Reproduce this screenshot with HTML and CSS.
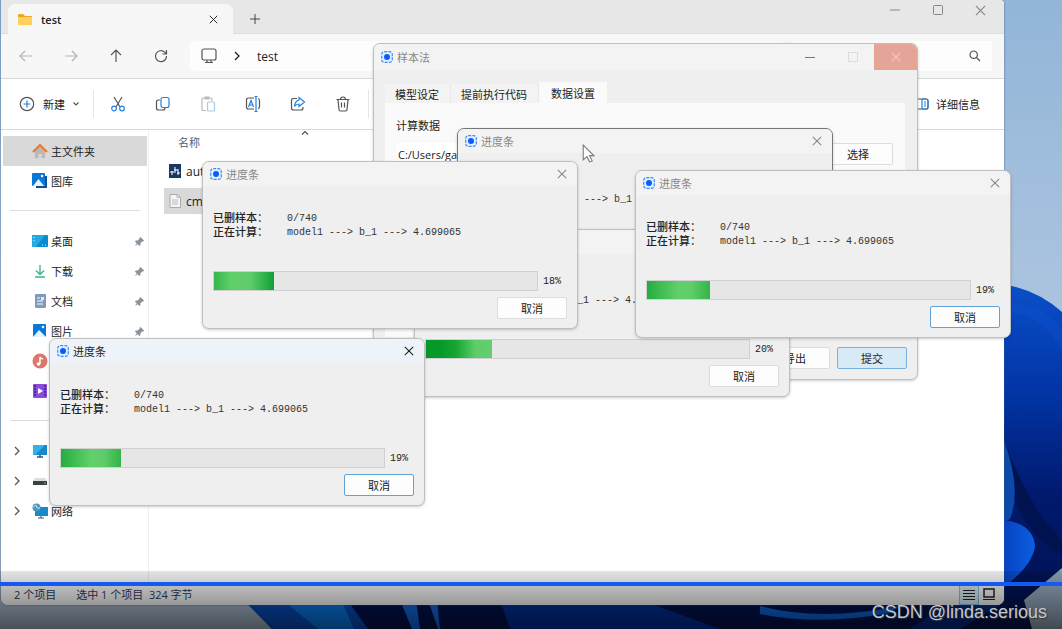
FILE: index.html
```html
<!DOCTYPE html>
<html lang="zh-CN">
<head>
  <meta charset="UTF-8">
  <meta name="viewport" content="width=device-width, initial-scale=1.0">
  <title>test</title>
  <link rel="stylesheet" href="styles.css">
</head>
<body>
  <!-- shared icons -->
  <svg class="sprite" aria-hidden="true">
    <symbol id="app" viewBox="0 0 12 12">
      <rect x=".7" y=".7" width="10.6" height="10.6" rx="2.500" fill="#e2f0ff" stroke="#3b8cf5" stroke-width="1.2" stroke-dasharray="3 1.2"/>
      <circle cx="6" cy="6" r="3" fill="#0a5cff"/>
    </symbol>
    <symbol id="x" viewBox="0 0 12 12">
      <path d="M1 1l10 10M11 1L1 11" fill="none" stroke="currentColor" stroke-width="1.3"/>
    </symbol>
    <symbol id="pin" viewBox="0 0 12 12">
      <path d="M7 1l4 4-1 1-1 0-2 2 0 2-1 1-2-2-3 2 2-3-2-2 1-1 2 0 2-2 0-1z" fill="#8a929a"/>
    </symbol>
    <symbol id="chevron" viewBox="0 0 8 10">
      <path d="M2 1l4 4-4 4" fill="none" stroke="currentColor" stroke-width="1.3"/>
    </symbol>
    <symbol id="picture" viewBox="0 0 16 16">
      <rect x="1" y="1" width="13" height="13" rx="1" fill="#0878d8"/>
      <path d="M1 14l6-7 7 7z" fill="#e5f4ff"/>
      <circle cx="11" cy="4" r="1.3" fill="#fff"/>
    </symbol>
  </svg>

  <main class="desktop">
    <svg class="wallpaper" viewBox="0 0 1062 629" preserveAspectRatio="none" aria-hidden="true">
      <defs>
        <linearGradient id="sky" x1="0" y1="0" x2="0" y2="1">
          <stop offset="0" stop-color="#92b5d8"/>
          <stop offset=".45" stop-color="#a9c3df"/>
          <stop offset="1" stop-color="#9fb1c3"/>
        </linearGradient>
        <linearGradient id="bloom" x1="0" y1="0" x2="0" y2="1">
          <stop offset="0" stop-color="#0a4fc8"/>
          <stop offset=".3" stop-color="#0236a8"/>
          <stop offset=".6" stop-color="#001a70"/>
          <stop offset="1" stop-color="#001048"/>
        </linearGradient>
        <linearGradient id="petal" x1="0" y1="0" x2="1" y2="0">
          <stop offset="0" stop-color="#0644c4"/>
          <stop offset="1" stop-color="#0b5ee0"/>
        </linearGradient>
      </defs>
      <rect width="1062" height="629" fill="url(#sky)"/>
      <path d="M1000 284Q1035 288 1062 312V580L1032 629H272L240 596H1000z" fill="url(#bloom)"/>
      <path d="M1000 303Q1040 300 1062 330V350Q1040 310 1000 313z" fill="#0a50cc" opacity=".5"/>
      <path d="M1004 440Q1030 510 1062 540V555Q1015 530 1004 460z" fill="#00124f"/>
      <path d="M1004 440Q1022 490 1010 519L1004 522z" fill="#0b4aa8"/>
      <path d="M1004 520Q1034 524 1035 547Q1032 566 1004 587z" fill="url(#petal)"/>
      <path d="M1032 629L1024 600L1062 568V629z" fill="#8fa4b8"/>
      <path d="M240 597H345L368 629H273z" fill="#064bb7"/>
      <path d="M285 602H342L354 629H318z" fill="#0876e4"/>
      <path d="M400 600L412 629H420L416 600zM428 600L438 629H440L437 600z" fill="#1265dc"/>
      <path d="M500 600H640L720 629H510z" fill="#002d98"/>
      <path d="M760 606Q820 622 900 606L890 613Q820 626 760 614z" fill="#0c63d8"/>
      <path d="M910 629L945 605H1000L960 629z" fill="#00277f"/>
    </svg>

    <section class="explorer" aria-label="test">
      <header class="tabs">
        <div class="tab">
          <svg width="14" height="12" viewBox="0 0 14 12"><path d="M0 2q0-1 1-1h4l2 2h6q1 0 1 1v7q0 1-1 1H1q-1 0-1-1z" fill="#eda821"/><path d="M0 4h14v7q0 1-1 1H1q-1 0-1-1z" fill="#ffd05c"/></svg>
          <span>test</span>
          <button class="plain" aria-label="关闭标签页"><svg width="9" height="9"><use href="#x"/></svg></button>
        </div>
        <button class="plain new-tab" aria-label="新标签页"><svg width="10" height="10" viewBox="0 0 10 10"><path d="M5 0v10M0 5h10" stroke="#444"/></svg></button>
        <div class="window-buttons">
          <button class="plain" aria-label="最小化"><svg width="10" height="10" viewBox="0 0 10 10"><path d="M0 5h10" stroke="#888"/></svg></button>
          <button class="plain" aria-label="最大化"><svg width="10" height="10" viewBox="0 0 10 10"><rect x=".5" y=".5" width="9" height="9" rx="1" fill="none" stroke="#888"/></svg></button>
          <button class="plain" aria-label="关闭"><svg width="11" height="11"><use href="#x"/></svg></button>
        </div>
      </header>

      <nav class="navbar">
        <button class="plain off" aria-label="后退"><svg width="14" height="14" viewBox="0 0 14 14"><path d="M13 7H1M6 2L1 7l5 5" class="line"/></svg></button>
        <button class="plain off" aria-label="前进"><svg width="14" height="14" viewBox="0 0 14 14"><path d="M1 7h12M8 2l5 5-5 5" class="line"/></svg></button>
        <button class="plain" aria-label="向上"><svg width="14" height="14" viewBox="0 0 14 14"><path d="M7 13V1M2 6l5-5 5 5" class="line"/></svg></button>
        <button class="plain" aria-label="刷新"><svg width="14" height="14" viewBox="0 0 14 14"><path d="M12.5 7A5.5 5.5 0 1 1 10.8 3.2L12.5 5M12.5 1v4h-4" class="line"/></svg></button>
        <div class="address">
          <svg width="16" height="16" viewBox="0 0 16 16"><rect x="1" y="1" width="14" height="11" rx="2" class="line"/><path d="M6 12v2M10 12v2M4 14.5h8" class="line"/></svg>
          <svg width="8" height="10"><use href="#chevron"/></svg>
          <span>test</span>
        </div>
        <button class="search" aria-label="搜索"><svg width="12" height="12" viewBox="0 0 12 12"><circle cx="4.7" cy="4.7" r="3.7" class="line"/><path d="M7.5 7.5L11 11" class="line"/></svg></button>
      </nav>

      <div class="toolbar">
        <button class="create">
          <svg width="16" height="16" viewBox="0 0 16 16"><circle cx="8" cy="8" r="6.7" class="line"/><path d="M8 4.5v7M4.5 8h7" class="line blue"/></svg>
          新建
          <svg width="6" height="4" viewBox="0 0 6 4"><path d="M.5.5L3 3 5.500.5" class="line"/></svg>
        </button>
        <button class="plain" aria-label="剪切"><svg width="16" height="16" viewBox="0 0 16 16"><path d="M4 1l6 10M12 1L6 11" class="line"/><circle cx="4" cy="12.500" r="2.300" class="line blue"/><circle cx="12" cy="12.500" r="2.300" class="line blue"/></svg></button>
        <button class="plain" aria-label="复制"><svg width="16" height="16" viewBox="0 0 16 16"><path d="M5 4H3.500Q1.500 4 1.500 6v6q0 2 2 2H8q2 0 2-2" class="line"/><rect x="6" y="1.500" width="8" height="10" rx="2" class="line blue"/></svg></button>
        <button class="plain off" aria-label="粘贴"><svg width="16" height="16" viewBox="0 0 16 16"><path d="M6 14.500H3q-1 0-1-1V3q0-1 1-1h8q1 0 1 1v2M5 1h4v2H5z" class="line"/><rect x="7.500" y="6" width="7" height="9" rx="1" class="line blue"/></svg></button>
        <button class="plain" aria-label="重命名"><svg width="16" height="16" viewBox="0 0 16 16"><path d="M9 2H3.500q-2 0-2 2v7q0 2 2 2H9M13 2.500q1.500 0 1.500 2v6q0 2-1.500 2" class="line"/><path d="M3.500 11L6 4.500 8.500 11M4.500 9h3M11 .5v15M9.500.5h3M9.500 15.500h3" class="line blue"/></svg></button>
        <button class="plain" aria-label="共享"><svg width="16" height="16" viewBox="0 0 16 16"><path d="M7 2.500H3.500q-2 0-2 2V12q0 2 2 2H11q2 0 2-2v-1" class="line"/><path d="M9 4V1.500L14.500 6 9 10.500V8Q6 8 4.500 10.500 5 5 9 4z" class="line blue"/></svg></button>
        <button class="plain" aria-label="删除"><svg width="16" height="16" viewBox="0 0 16 16"><path d="M1.500 3.500h13M5.500 3.500q0-2.500 2.500-2.500t2.500 2.500M3 4l1 9.500q0 1.500 1.500 1.500h5q1.500 0 1.500-1.500L13 4M6.500 6.500v5M9.500 6.500v5" class="line"/></svg></button>
        <span class="divider"></span>
        <button class="details">
          <svg width="14" height="12" viewBox="0 0 14 12"><rect x="1" y="1" width="12" height="10" rx="2" class="line"/><path d="M7 1h4q2 0 2 2v6q0 2-2 2H7z" class="line blue"/><path d="M9 4h2M9 6h2M9 8h2" class="line blue"/></svg>
          详细信息
        </button>
      </div>

      <div class="content">
        <nav class="sidebar">
          <ul>
            <li class="selected"><svg class="icon" viewBox="0 0 16 16"><path d="M3 7l5-4 5 4v8H9.500v-4h-3v4H3z" fill="#b9b9b9"/><path d="M1 9l7-7 7 7" fill="none" stroke="#ed762b" stroke-width="2"/></svg><a href="#">主文件夹</a></li>
            <li><svg class="icon" viewBox="0 0 16 16"><path d="M13 3h2v12H4v-2h9z" fill="#0a5099"/><rect width="13" height="13" rx="1" fill="#0878d8"/><path d="M1 13l5.500-7L12 13z" fill="#e5f4ff"/><circle cx="10" cy="3" r="1.200" fill="#fff"/></svg><a href="#">图库</a></li>
          </ul>
          <hr>
          <ul>
            <li><svg class="icon" viewBox="0 0 16 16"><rect y="2" width="16" height="12" rx="1" fill="#0b8ccf"/><path d="M0 2h13L4 14H0z" fill="#26a9e2"/><path d="M2 4v1M2 7v1M10 12h1M13 12h1" stroke="#d8f4ff"/></svg><a href="#">桌面</a><svg class="pin"><use href="#pin"/></svg></li>
            <li><svg class="icon" viewBox="0 0 16 16"><path d="M8 2v9M4 7.500l4 4 4-4M3 14h10" fill="none" stroke="#3caf91" stroke-width="1.300"/></svg><a href="#">下载</a><svg class="pin"><use href="#pin"/></svg></li>
            <li><svg class="icon" viewBox="0 0 16 16"><rect x="3" y="1" width="11" height="14" rx="1" fill="#8199bd"/><path d="M5 5h3M5 8h6M5 11h6" stroke="#fff"/><rect x="9" y="4" width="3" height="3" fill="#dfe9f7"/></svg><a href="#">文档</a><svg class="pin"><use href="#pin"/></svg></li>
            <li><svg class="icon"><use href="#picture"/></svg><a href="#">图片</a><svg class="pin"><use href="#pin"/></svg></li>
            <li><svg class="icon" viewBox="0 0 16 16"><circle cx="8" cy="8" r="7.500" fill="#dc776b"/><path d="M8 11V4q1 2 3 2" fill="none" stroke="#fff" stroke-width="1.500"/><circle cx="6.500" cy="11" r="1.800" fill="#fff"/></svg><a href="#" aria-label="音乐"></a></li>
            <li><svg class="icon" viewBox="0 0 16 16"><rect x="1" y="1" width="14" height="14" rx="1" fill="#8a4be0"/><path d="M3 2v12M13 2v12" stroke="#42207d" stroke-width="1.500" stroke-dasharray="2 1"/><path d="M6 5l5 3-5 3z" fill="#fff"/></svg><a href="#" aria-label="视频"></a></li>
          </ul>
          <hr>
          <ul>
            <li><svg class="arrow"><use href="#chevron"/></svg><svg class="icon" viewBox="0 0 16 16"><rect x="1" y="2" width="14" height="10" fill="#1689cb"/><path d="M1 2h12L3 12H1z" fill="#32b2e9"/><path d="M8 12v2M5 14h6" stroke="#35566d" stroke-width="1.500"/></svg><a href="#" aria-label="此电脑"></a></li>
            <li><svg class="arrow"><use href="#chevron"/></svg><svg class="icon" viewBox="0 0 16 16"><path d="M3 5h10l2 3H1z" fill="#dedede"/><path d="M1 8h14v4H1z" fill="#3b4243"/><path d="M12 10h2" stroke="#42cb98"/></svg><a href="#" aria-label="磁盘"></a></li>
            <li><svg class="arrow"><use href="#chevron"/></svg><svg class="icon" viewBox="0 0 16 16"><rect x="3" y="4" width="13" height="9" fill="#168acb"/><path d="M9 13v2M6 15h6" stroke="#35566d"/><circle cx="4.500" cy="4.500" r="4" fill="#5197b9"/><path d="M1 4l3-2 1 3 3 0" fill="none" stroke="#b8e2ef"/></svg><a href="#">网络</a></li>
          </ul>
        </nav>
        <div class="files">
          <svg class="sort" viewBox="0 0 8 4"><path d="M1 3.500l3-3 3 3" class="line"/></svg>
          <table>
            <thead>
              <tr><th>名称</th></tr>
            </thead>
            <tbody>
              <tr><td><svg width="12" height="14" viewBox="0 0 12 14"><rect width="12" height="14" fill="#173864"/><path d="M3 7v4M6 3v6M9 5v6M1 8h4M5 6h4M8 9h3" stroke="#fff"/></svg>auto</td></tr>
              <tr class="selected"><td><svg width="12" height="14" viewBox="0 0 12 14"><path d="M1 .5h7l3.500 3v10H1z" fill="#f5f5f5" stroke="#aaa"/><path d="M8 .5v3h3.500M3 6h6M3 8h6M3 10h6" fill="none" stroke="#bbb"/></svg>cmd</td></tr>
            </tbody>
          </table>
        </div>
      </div>

      <footer class="status">
        <span>2 个项目</span>
        <span>选中 1 个项目&nbsp; 324 字节</span>
        <div class="views">
          <button class="active" aria-label="详细信息"><svg width="12" height="11" viewBox="0 0 12 11"><path d="M0 1.500h12M0 4.500h12M0 7.500h12M0 10.500h12" stroke="#222"/></svg></button>
          <button aria-label="大图标"><svg width="12" height="12" viewBox="0 0 12 12"><rect x="1" y="1" width="10" height="8" fill="none" stroke="#222" stroke-width="1.500"/><path d="M0 11.500h12" stroke="#222"/></svg></button>
        </div>
      </footer>
    </section>

    <section class="window settings" aria-label="样本法">
      <header class="titlebar">
        <svg class="logo"><use href="#app"/></svg>
        <h2>样本法</h2>
        <button class="plain" aria-label="最小化"><svg width="10" height="10" viewBox="0 0 10 10"><path d="M0 5.500h10" stroke="#777"/></svg></button>
        <button class="plain" aria-label="最大化" disabled><svg width="10" height="10" viewBox="0 0 10 10"><rect x=".5" y=".5" width="9" height="9" fill="none" stroke="#ddd"/></svg></button>
        <button class="plain danger" aria-label="关闭"><svg width="10" height="10"><use href="#x"/></svg></button>
      </header>
      <div class="tablist">
        <button>模型设定</button>
        <button>提前执行代码</button>
        <button class="current">数据设置</button>
      </div>
      <div class="pane">
        <label for="path">计算数据</label>
        <div class="path-row">
          <input type="text" id="path" value="C:/Users/ga">
          <button class="button">选择</button>
        </div>
      </div>
      <div class="actions">
        <button class="button">导出</button>
        <button class="button primary">提交</button>
      </div>
    </section>

    <section class="window progress p1" aria-label="进度条">
      <header class="titlebar"><svg class="logo"><use href="#app"/></svg><h2>进度条</h2><button class="close" aria-label="关闭"><svg width="10" height="10"><use href="#x"/></svg></button></header>
      <dl><dt>已删样本：</dt><dd>0/740</dd><dt>正在计算：</dt><dd>model1 ---&gt; b_1 ---&gt; 4.699065</dd></dl>
    </section>

    <section class="window progress p2" aria-label="进度条">
      <header class="titlebar"><svg class="logo"><use href="#app"/></svg><h2>进度条</h2><button class="close" aria-label="关闭"><svg width="10" height="10"><use href="#x"/></svg></button></header>
      <dl><dt>已删样本：</dt><dd>0/740</dd><dt>正在计算：</dt><dd>model1 ---&gt; b_1 ---&gt; 4.699065</dd></dl>
      <div class="bar"><progress id="bar2" max="100" value="20.5"></progress><label for="bar2">20%</label></div>
      <button class="button">取消</button>
    </section>

    <section class="window progress p3" aria-label="进度条">
      <header class="titlebar"><svg class="logo"><use href="#app"/></svg><h2>进度条</h2><button class="close" aria-label="关闭"><svg width="10" height="10"><use href="#x"/></svg></button></header>
      <dl><dt>已删样本：</dt><dd>0/740</dd><dt>正在计算：</dt><dd>model1 ---&gt; b_1 ---&gt; 4.699065</dd></dl>
      <div class="bar"><progress id="bar3" max="100" value="18.5"></progress><label for="bar3">18%</label></div>
      <button class="button">取消</button>
    </section>

    <section class="window progress p4" aria-label="进度条">
      <header class="titlebar"><svg class="logo"><use href="#app"/></svg><h2>进度条</h2><button class="close" aria-label="关闭"><svg width="10" height="10"><use href="#x"/></svg></button></header>
      <dl><dt>已删样本：</dt><dd>0/740</dd><dt>正在计算：</dt><dd>model1 ---&gt; b_1 ---&gt; 4.699065</dd></dl>
      <div class="bar"><progress id="bar4" max="100" value="19.5"></progress><label for="bar4">19%</label></div>
      <button class="button focus">取消</button>
    </section>

    <section class="window progress p5 active" aria-label="进度条">
      <header class="titlebar"><svg class="logo"><use href="#app"/></svg><h2>进度条</h2><button class="close" aria-label="关闭"><svg width="10" height="10"><use href="#x"/></svg></button></header>
      <dl><dt>已删样本：</dt><dd>0/740</dd><dt>正在计算：</dt><dd>model1 ---&gt; b_1 ---&gt; 4.699065</dd></dl>
      <div class="bar"><progress id="bar5" max="100" value="18.5"></progress><label for="bar5">19%</label></div>
      <button class="button focus">取消</button>
    </section>

    <svg class="cursor" viewBox="0 0 12 18"><path d="M1 1v14l3.500-3 2.500 5 2.500-1-2.500-5H11z" fill="#fff" stroke="#777"/></svg>

    <div class="player">
      <div class="timeline"></div>
    </div>
    <span class="watermark">CSDN @linda.serious</span>
  </main>
</body>
</html>
```
FILE: styles.css
```css
* {
  box-sizing: border-box;
}
body {
  margin: 0;
  font-family: "Open Sans", "Noto Sans CJK SC", sans-serif;
  font-size: 11px;
  color: #222;
}
button, input {
  font: inherit;
  color: inherit;
  padding: 0;
  border: 0;
  background: none;
}
svg {
  flex: none;
}
h2, ul, dl, dd {
  margin: 0;
  padding: 0;
}
a {
  color: inherit;
  text-decoration: none;
}
.sprite {
  position: absolute;
  width: 0;
  height: 0;
}
.desktop {
  position: relative;
  height: 100vh;
  overflow: hidden;
}
.wallpaper {
  position: absolute;
  width: 100%;
  height: 100%;
}
.plain {
  display: flex;
  align-items: center;
  justify-content: center;
}
.line {
  fill: none;
  stroke: #555;
  stroke-width: 1.2;
}
.blue {
  stroke: #2381df;
}
.off {
  opacity: .4;
}

/* explorer */
.explorer {
  position: absolute;
  inset: 0 58px 24px 1px;
  display: flex;
  flex-direction: column;
  overflow: hidden;
  background: #fff;
  border-radius: 0 4px 7px 7px;
  box-shadow: 0 0 2px #3b5878;
}
.tabs {
  display: flex;
  height: 34px;
  padding-left: 7px;
  background: #e7e7e7;
  border-bottom: 1px solid #dedede;
}
.tab {
  display: flex;
  align-items: center;
  width: 225px;
  margin: 4px 0 -1px;
  padding: 0 15px 0 10px;
  gap: 9px;
  border-radius: 7px 7px 0 0;
  background: #f7f7f7;
  font-weight: 600;
}
.tab span {
  flex: 1;
}
.new-tab {
  width: 44px;
  padding-top: 4px;
}
.window-buttons {
  display: flex;
  height: 20px;
  margin: 0 2px 0 auto;
  color: #888;
}
.window-buttons button {
  width: 43px;
}
.navbar {
  display: flex;
  align-items: center;
  height: 45px;
  padding: 0 12px 0 2px;
  background: #f7f7f7;
  border-bottom: 1px solid #d9d9d9;
}
.navbar > .plain {
  width: 45px;
}
.address {
  display: flex;
  align-items: center;
  flex: 1;
  height: 30px;
  margin-left: 7px;
  padding-left: 11px;
  gap: 16px;
  border-radius: 4px;
  background: #fdfdfd;
  font-size: 12px;
}
.search {
  display: flex;
  align-items: center;
  justify-content: flex-end;
  width: 200px;
  height: 30px;
  margin-left: 8px;
  padding-right: 11px;
  background: #fdfdfd;
}
.toolbar {
  display: flex;
  align-items: center;
  height: 51px;
  border-bottom: 1px solid #d9d9d9;
}
.toolbar > .plain {
  width: 45px;
}
.create {
  display: flex;
  align-items: center;
  width: 93px;
  height: 28px;
  padding-left: 18px;
  margin-right: 1px;
  gap: 8px;
  border-right: 1px solid #e5e5e5;
}
.divider {
  width: 1px;
  height: 28px;
  margin-left: 3px;
  background: #e5e5e5;
}
.details {
  display: flex;
  align-items: center;
  gap: 7px;
  margin-left: auto;
  padding-right: 24px;
}
.content {
  display: flex;
  flex: 1;
  min-height: 0;
}
.sidebar {
  width: 148px;
  padding: 6px 1px 0 2px;
  border-right: 1px solid #f0f0f0;
}
.sidebar ul {
  list-style: none;
}
.sidebar li {
  display: flex;
  align-items: center;
  height: 30px;
  padding: 0 2px 0 29px;
  gap: 3px;
}
.sidebar hr {
  width: 130px;
  margin: 14px 7px 15px;
  border: 0;
  border-top: 1px solid #ddd;
}
.selected {
  background: #d9d9d9;
}
.icon {
  width: 16px;
  height: 16px;
}
.pin {
  width: 11px;
  height: 11px;
  margin-left: auto;
}
.arrow {
  width: 8px;
  height: 10px;
  margin: 0 8px 0 -19px;
  color: #555;
}
.files {
  position: relative;
  flex: 1;
  padding-left: 15px;
}
.sort {
  position: absolute;
  top: 1px;
  left: 152px;
  width: 8px;
  height: 4px;
}
.files table {
  width: 100%;
  border-collapse: collapse;
}
.files th {
  height: 24px;
  padding: 0 15px 0 14px;
  text-align: left;
  font-weight: 400;
  color: #4c607a;
}
.files td {
  display: flex;
  align-items: center;
  height: 26px;
  margin-top: 4px;
  padding: 0 5px;
  gap: 5px;
  font-size: 12px;
}
.files .selected {
  background: none;
}
.files .selected td {
  background: #d9d9d9;
}
.status {
  display: flex;
  align-items: center;
  height: 22px;
  padding: 0 5px 0 13px;
  gap: 20px;
  background: #f1f1f1;
  color: #28395c;
}
.views {
  display: flex;
  align-self: stretch;
  margin-left: auto;
}
.views button {
  display: flex;
  align-items: center;
  justify-content: center;
  width: 20px;
}
.views .active {
  border: 1px solid #84bce0;
  background: #d6e5ef;
}

/* windows */
.window {
  position: absolute;
  border: 1px solid #bfbfbf;
  border-radius: 7px;
  background: #efefef;
  box-shadow: 0 1px 3px #0003;
  overflow: hidden;
}
.titlebar {
  display: flex;
  align-items: center;
  height: 26px;
  padding-left: 7px;
  gap: 4px;
  background: #f3f3f3;
  color: #888;
}
.titlebar h2 {
  flex: 1;
  font-size: 11px;
  font-weight: 400;
}
.logo {
  width: 12px;
  height: 12px;
}
.button {
  width: 70px;
  height: 22px;
  border: 1px solid #dcdcdc;
  border-radius: 2px;
  background: #fdfdfd;
  color: #222;
}
.focus {
  border-color: #5fa4d9;
}
.primary {
  border-color: #78b2e0;
  background: #d9eaf7;
}
.settings {
  top: 43px;
  left: 373px;
  width: 545px;
}
.settings .titlebar .plain {
  align-self: stretch;
  width: 43px;
  margin-left: -4px;
}
.settings .titlebar .danger {
  background: #e6a398;
  color: #f4c8c0;
}
.tablist {
  display: flex;
  align-items: flex-end;
  padding: 12px 11px 0;
}
.tablist button {
  height: 19px;
  padding: 0 11px 0 10px;
  border-right: 1px solid #e8e8e8;
  background: #f3f3f3;
}
.tablist .current {
  height: 21px;
  padding: 0 12px;
  border: 0;
  background: #fafafa;
}
.pane {
  min-height: 234px;
  margin: 0 12px 0 11px;
  padding: 14px 12px 0 11px;
  background: #fafafa;
}
.pane label {
  display: block;
  line-height: 18px;
}
.path-row {
  display: flex;
  gap: 8px;
  margin-top: 8px;
}
.path-row input {
  flex: 1;
  padding: 0 2px;
  background: #fff;
}
.actions {
  display: flex;
  justify-content: flex-end;
  gap: 7px;
  padding: 10px 10px 10px 11px;
}
.progress {
  width: 376px;
  height: 168px;
}
.progress .titlebar {
  height: 24px;
}
.progress .close {
  display: flex;
  padding: 4px;
  margin-right: 6px;
  color: #888;
}
.progress dl {
  display: grid;
  grid-template-columns: 74px 1fr;
  margin-top: 26px;
  padding-left: 10px;
  line-height: 14px;
}
.progress dt {
  font-family: "Liberation Mono", "Noto Sans CJK SC", monospace;
  font-size: 11px;
  font-weight: 500;
}
.progress dd {
  font-family: "Liberation Mono", monospace;
  font-size: 10px;
  color: #333;
}
.bar {
  display: flex;
  align-items: center;
  gap: 5px;
  margin-top: 31px;
  padding-left: 10px;
  font-family: "Liberation Mono", monospace;
  font-size: 10px;
}
.bar progress {
  appearance: none;
  width: 325px;
  height: 20px;
  border: 1px solid #d0d0d0;
  background: #e6e6e6;
}
.bar progress::-webkit-progress-bar {
  background: #e6e6e6;
}
.bar progress::-webkit-progress-value {
  background: linear-gradient(90deg, #25ad3e, #62cf6d 50%, #60cc6b 70%, #32b548);
}
.p2 progress::-webkit-progress-value {
  background: linear-gradient(90deg, #05992a 20%, #15a533 45%, #5fcc6b 75%, #62ce6e);
}
.p3 progress::-webkit-progress-value {
  background: linear-gradient(90deg, #35b64b, #62cf6d 30%, #60cc6b 60%, #0ca132);
}
.progress .button {
  display: block;
  margin: 6px 10px 0 auto;
}
.p1 {
  top: 128px;
  left: 457px;
  border-color: #777;
}
.p2 {
  top: 229px;
  left: 414px;
}
.p3 {
  top: 161px;
  left: 202px;
}
.p4 {
  top: 170px;
  left: 635px;
}
.p5 {
  top: 338px;
  left: 49px;
}
.active .titlebar {
  background: #edf3f9;
  color: #222;
}
.active .close {
  color: #222;
}
.cursor {
  position: absolute;
  top: 144px;
  left: 582px;
  width: 13px;
  height: 19px;
}

/* video controls over the desktop */
.player {
  position: absolute;
  inset: auto 0 0;
  height: 58px;
  padding-top: 11px;
  background: linear-gradient(#0000001c, #0000008c);
}
.timeline {
  height: 4px;
  background: #1459f0;
}
.watermark {
  position: absolute;
  right: 15px;
  bottom: 6px;
  font: 18px "Liberation Sans", sans-serif;
  color: #c4c8d0;
  text-shadow: 1px 1px 1px #333;
}
```
